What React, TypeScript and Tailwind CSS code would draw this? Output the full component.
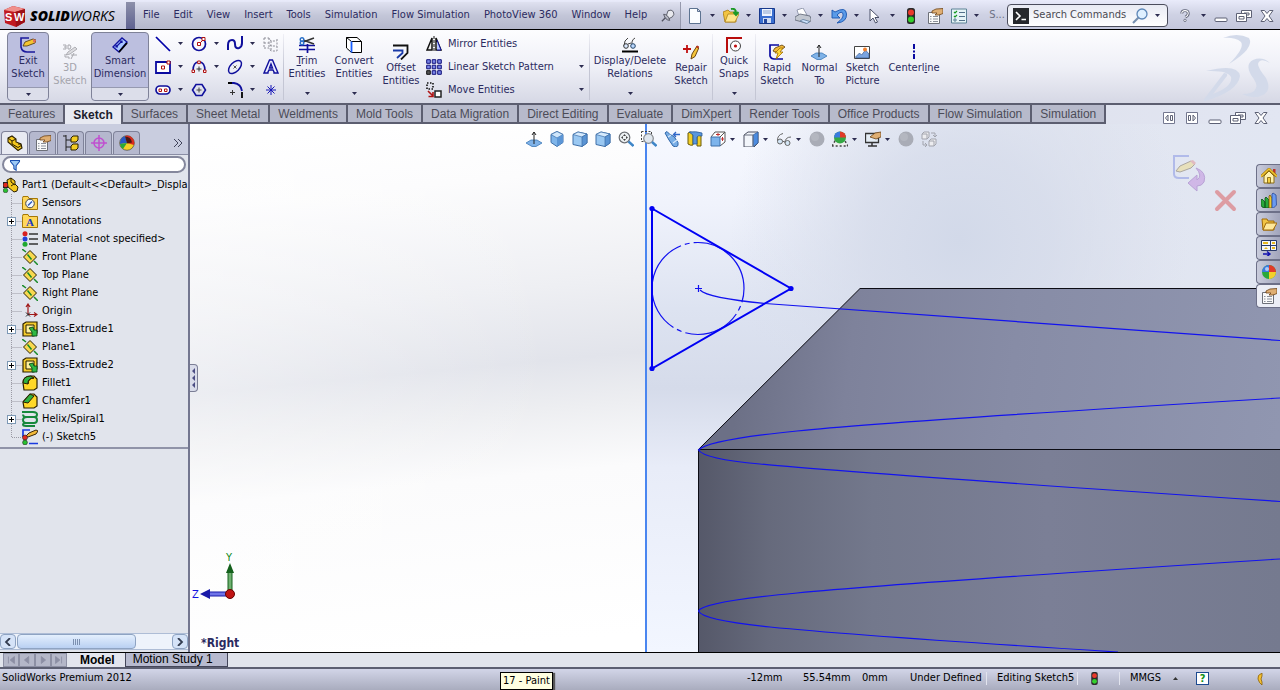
import type { ReactNode } from 'react';
import clsx from 'clsx';

const glyphs: Record<string, ReactNode> = {
    exitSketch: (
        <>
            <path d="M9 1H1v9q1 5 6 5h8" fill="none" stroke="#1a1a9c" strokeWidth="1.6" />
            <path d="M3 9l2-4 8-3 3 1-1 3-8 3z" fill="#f4c430" stroke="#4a3508" strokeWidth=".8" />
            <path d="M13 2l3 1-1 3-2-1z" fill="#e0705a" />
        </>
    ),
    sketch3d: (
        <>
            <path d="M1 1h3v4H1M2 3h2M6 1h2q2 2 0 4H6z" fill="none" stroke="#a8a8ae" />
            <path d="M4 11l2-3 7-5 2 2-7 5z" fill="#dcdce0" stroke="#a0a0a6" strokeWidth=".8" />
            <path d="M3 10v3h4v2M9 11h6M12 9l-3 6" fill="none" stroke="#a8a8ae" />
        </>
    ),
    smartDim: (
        <>
            <path d="M1 10l9-9 5 4-8 10z" fill="#a9c6ff" stroke="#1212a0" strokeWidth="1.4" />
            <path d="M4 10l6-6M4 8v2h2M8 4h2v2" fill="none" stroke="#1212a0" strokeWidth="1.2" />
            <path d="M7 15l8-9" stroke="#000" strokeWidth="1.8" />
        </>
    ),
    line: <path d="M1 1l14 14" stroke="#0000a8" strokeWidth="1.7" />,
    circle: (
        <>
            <circle cx="8" cy="8" r="6.5" fill="none" stroke="#10109c" strokeWidth="1.7" />
            <path d="M8 8l4-4" stroke="#b01010" />
            <path d="M6.5 6.500h3v3h-3zM11 1.500h3v3h-3z" fill="#fff" stroke="#b01010" />
        </>
    ),
    spline: <path d="M1 14V9q0-5 4-5 3 0 3 4 0 5 4 4 3-1 3-5V0" fill="none" stroke="#10109c" strokeWidth="2" />,
    grid: (
        <path
            d="M1 2h5l2 3h6M1 7h5l2 3h6M1 12h5l2 3h6M1 2v10M6 2v10M8 5v10M14 3v12"
            fill="none"
            stroke="#8c8c96"
            strokeDasharray="2 1.500"
        />
    ),
    rect: (
        <>
            <path d="M1 3h14v11H1z" fill="#fff" stroke="#0a0aa0" strokeWidth="1.8" />
            <path d="M6.500 7h3v3h-3zM12 2h3v3h-3z" fill="#fff" stroke="#b01010" />
        </>
    ),
    arc: (
        <>
            <path d="M2 12q0-9 6-9t6 9" fill="none" stroke="#10109c" strokeWidth="1.6" />
            <path d="M1 11h2.500v2.500H1zM12.500 11H15v2.500h-2.500zM6.700 2h2.600v2.600H6.700z" fill="#fff" stroke="#b01010" />
            <path d="M8 7.500v5M5.500 10h5" stroke="#333" />
        </>
    ),
    ellipse: (
        <>
            <ellipse cx="8" cy="8" rx="8" ry="4.500" transform="rotate(-45 8 8)" fill="none" stroke="#10109c" strokeWidth="1.5" />
            <path d="M6.500 6.500l3 3M9.500 6.500l-3 3" stroke="#555" />
        </>
    ),
    textA: <path d="M1 14h4v-1l1-2h4l1 2v1h4L9.500 1h-3L1 14zM6.500 9L8 5l1.500 4z" fill="#eef" stroke="#10109c" strokeWidth="1.400" />,
    slot: (
        <>
            <rect x="1" y="4" width="14" height="8" rx="4" fill="#fff" stroke="#10109c" strokeWidth="1.700" />
            <path d="M4 7h2.500v2.500H4zM9.500 7H12v2.500H9.500z" fill="#fff" stroke="#b01010" />
        </>
    ),
    polygon: (
        <>
            <path d="M1.500 8L5 2.500h6L14.500 8 11 13.500H5z" fill="none" stroke="#10109c" strokeWidth="1.600" />
            <path d="M8 5.500v5M5.500 8h5" stroke="#444" />
        </>
    ),
    fillet: (
        <>
            <path d="M1 1h6q7 1 8 8" fill="none" stroke="#10109c" strokeWidth="1.800" />
            <path d="M1 1h4M15 10v6" stroke="#000" strokeWidth="1.800" />
            <path d="M5.500 8v5M3 10.500h5" stroke="#333" />
        </>
    ),
    point: <path d="M8 3v10M3 8h10M4.500 4.500l7 7M11.500 4.500l-7 7" stroke="#1515b8" />,
    trim: (
        <>
            <path d="M0 8.500h16M0 12.500h16M8.500 7v9" stroke="#10109c" strokeWidth="1.700" />
            <path d="M4 5l11-4M4 3l11 4" stroke="#333" strokeWidth="1.500" />
            <circle cx="3" cy="2.500" r="1.800" fill="none" stroke="#2a70c8" strokeWidth="1.400" />
            <circle cx="3" cy="6" r="1.800" fill="none" stroke="#2a70c8" strokeWidth="1.400" />
        </>
    ),
    convert: (
        <>
            <path d="M.5.5H11l4.500 4v11H5.500l-5-4.500z" fill="#fff" stroke="#000" />
            <path d="M.5.5l5 4h10" fill="none" stroke="#000" />
            <path d="M5.500 4.500v11" stroke="#1a60ff" strokeWidth="1.800" />
        </>
    ),
    offset: (
        <>
            <path d="M0 1.500h14.500V9L8 15.500" fill="none" stroke="#111" strokeWidth="1.800" />
            <path d="M0 6.500h9.500V9L4 14" fill="none" stroke="#1a3aa8" strokeWidth="1.800" />
        </>
    ),
    mirror: (
        <>
            <path d="M6 2L1 14h5zM10 2l5 12h-5z" fill="#eee" stroke="#111" strokeWidth="1.500" />
            <path d="M11 4l4 10h-4" fill="#b9c8ff" stroke="#10109c" />
            <path d="M8 0v16" stroke="#111" strokeDasharray="3 1" />
        </>
    ),
    pattern: (
        <>
            <path d="M.7.7h3.600v3.600H.7zM6.200.7h3.600v3.600H6.200zM11.700.7h3.600v3.600h-3.600zM.7 6.200h3.600v3.600H.7zM6.200 6.200h3.600v3.600H6.200zM11.700 6.200h3.600v3.600h-3.600zM6.200 11.700h3.600v3.600H6.200zM11.700 11.700h3.600v3.600h-3.600z" fill="#7a86e8" stroke="#10107a" />
            <path d="M.7 11.700h3.600v3.600H.7z" fill="#555" stroke="#111" />
        </>
    ),
    move: (
        <>
            <path d="M1 1h6v6H1z" fill="none" stroke="#111" strokeWidth="1.600" strokeDasharray="1.500 1.500" />
            <path d="M2 9l5 5M7 10v4.500H2.500" fill="none" stroke="#b01515" strokeWidth="1.600" />
            <path d="M9 9h6v6H9z" fill="#fff" stroke="#222" strokeWidth="1.500" />
        </>
    ),
    relations: (
        <>
            <path d="M6 1Q2 3 2 9M13 1q-4 2-3 8M6 7l3-1" fill="none" stroke="#444" />
            <circle cx="4" cy="9" r="2.300" fill="#dceaff" stroke="#333" />
            <circle cx="11" cy="9" r="2.300" fill="#bcd8ff" stroke="#246" />
            <path d="M0 14.500h16" stroke="#000" strokeWidth="2" />
        </>
    ),
    repair: (
        <>
            <path d="M4 1v8M0 5h8" stroke="#c01010" strokeWidth="1.800" />
            <path d="M8 15l1-5 5-8 2 1.500-4 9z" fill="#f6c53a" stroke="#6a4510" />
            <path d="M13.500 2.500l2 1" stroke="#c03020" strokeWidth="2" />
        </>
    ),
    snaps: (
        <>
            <path d="M1 16V1h15" fill="none" stroke="#b80c0c" strokeWidth="2" />
            <circle cx="9.500" cy="9" r="5" fill="#fff" stroke="#444" />
            <circle cx="9.500" cy="9" r="1.600" fill="#c01010" />
        </>
    ),
    rapid: (
        <>
            <path d="M10 1H1v11q1 3 4 3h9" fill="none" stroke="#0a0aa0" strokeWidth="1.700" />
            <path d="M4 7l2-3 7-3 3 2-4 3-6 2z" fill="#f2b93a" stroke="#5a3a08" strokeWidth=".8" />
            <path d="M11 4L6 9h3l-2 6 7-7h-3l3-4z" fill="#ffd83a" stroke="#a06a00" strokeWidth=".8" />
        </>
    ),
    normal: (
        <>
            <path d="M0 12l5-3h6l5 3-6 3.500H6z" fill="#7fb2e8" stroke="#3c78b8" strokeWidth=".8" />
            <path d="M8 13V1M6 4l2-3 2 3" fill="none" stroke="#222" />
        </>
    ),
    picture: (
        <>
            <path d="M.5 2.500h15v12H.5z" fill="#fff" stroke="#444" />
            <path d="M1.500 13l4-4 2 2 4-5 3.500 4v4h-13z" fill="#7aa4e0" stroke="#2a4a80" strokeWidth=".6" />
            <circle cx="11" cy="5.500" r="2" fill="#f08030" />
        </>
    ),
    centerline: <path d="M8 0v16" stroke="#0a0aa0" strokeWidth="2" strokeDasharray="5 1.500 2 1.500" />,
    page: <path d="M2.500.5h8l3 3v12h-11zM10.500.5v3h3" fill="#fbfdff" stroke="#5d7391" />,
    open: (
        <>
            <path d="M0 4l5-2 2 2h6v10H2z" fill="#f2c443" stroke="#a87c12" strokeWidth=".8" />
            <path d="M2 14l3-8h11l-4 8z" fill="#ffe48a" stroke="#b08418" strokeWidth=".8" />
            <path d="M8 1q5-1 5 4M10.500 4L13 7l2.500-3" fill="none" stroke="#1e9a28" strokeWidth="2" />
        </>
    ),
    save: (
        <>
            <path d="M.5.5h15v15h-15z" fill="#3a6fd0" stroke="#17388c" />
            <path d="M3 1h10v7H3z" fill="#eef4ff" />
            <path d="M4 3h8M4 5h8" stroke="#8aa4cc" />
            <path d="M4 10h8v5H4z" fill="#cfdcf2" />
            <path d="M5 11h3v4H5z" fill="#24479c" />
        </>
    ),
    print: (
        <>
            <path d="M4 8L2 2l6-2 4 7z" fill="#fff" stroke="#8088a0" strokeWidth=".8" />
            <path d="M0 9l5-3 10 2 1 3v2l-5 2-11-3z" fill="#c2c7d0" stroke="#5d6473" strokeWidth=".8" />
            <path d="M5 13l7 2.500 3-2-7-2z" fill="#cfe4ff" stroke="#5d7898" strokeWidth=".8" />
        </>
    ),
    undo: <path d="M1 2v8h8L6 7q5-5 6-1t-6 9q10-1 9.500-9T4 4z" fill="#5a9be8" stroke="#1a55b0" strokeWidth=".9" />,
    cursor: <path d="M3 1v12l3-3 2.500 5 2-1L8 9.500h4z" fill="#fff" stroke="#4a5068" />,
    traffic: (
        <>
            <rect x="4" y="0" width="8" height="16" rx="2.500" fill="#2b2b2b" />
            <circle cx="8" cy="4.500" r="3" fill="#ea3a2c" />
            <circle cx="8" cy="11.500" r="3" fill="#34d02c" />
        </>
    ),
    props: (
        <>
            <path d="M1.500 4.500h11v11h-11z" fill="#fafafa" stroke="#6d7078" />
            <path d="M3 8.500h1.500M6 8.500h5M3 11h1.500M6 11h5M3 13.500h1.500M6 13.500h5" stroke="#8a8f99" />
            <path d="M5 3l4-2 7-.5v5L12 7 8 7l2-2-5 0z" fill="#dfae72" stroke="#6c4316" strokeWidth=".8" />
        </>
    ),
    options: (
        <>
            <path d="M.5 1h15v14H.5z" fill="#e6f4f6" stroke="#5c8296" />
            <path d="M3 4l1 1 2-2M3 8l1 1 2-2" fill="none" stroke="#169a22" strokeWidth="1.200" />
            <path d="M3 11h2v2H3z" fill="none" stroke="#5c8296" />
            <path d="M8 4.500h6M8 8.500h6M8 12.500h6" stroke="#54718a" />
        </>
    ),
    pin: (
        <>
            <path d="M8 2q4-2 6 1t-1 6l-4 2-3-3z" fill="#e8e9ee" stroke="#50525f" />
            <path d="M3 6q5 0 7 7-5 0-7-7z" fill="#b4b6c2" stroke="#50525f" />
            <path d="M5 10l-4 4" stroke="#50525f" strokeWidth="1.500" />
        </>
    ),
    magnifier: (
        <>
            <circle cx="10" cy="6" r="5" fill="#dff0ff" stroke="#5d87b8" strokeWidth="1.300" />
            <path d="M6.500 9.500L1 15" stroke="#7790b0" strokeWidth="2.200" />
        </>
    ),
    zoomFit: (
        <>
            <circle cx="6.500" cy="6.500" r="5.300" fill="#eef2f4" stroke="#6d7075" strokeWidth="1.200" />
            <path d="M6.500 3l1.500 2h-3zM6.500 10L5 8h3zM3 6.500L5 5v3zM10 6.500L8 5v3z" fill="#444" />
            <path d="M10.500 10.500l5 4.500" stroke="#3f86c8" strokeWidth="2.400" />
        </>
    ),
    zoomArea: (
        <>
            <path d="M.5.500h10v10H.5z" fill="none" stroke="#444" strokeDasharray="2 1.500" />
            <circle cx="7.500" cy="7.500" r="4.800" fill="#dfe6ee" stroke="#85898f" strokeWidth="1.200" />
            <path d="M11 11l4.500 4" stroke="#3f86c8" strokeWidth="2.400" />
        </>
    ),
    prevView: (
        <>
            <path d="M1 2l2-1.500 3 3 4 2 4 6v3l-2 1.500-3-1-4-6z" fill="#79aee6" stroke="#2f66a8" />
            <path d="M4 6l3-2M9 12l4-3" stroke="#d6e8fa" strokeWidth="1.200" />
            <path d="M16 3.500h-6M12 1L9.500 3.500 12 6" fill="none" stroke="#2f66c8" strokeWidth="1.300" />
        </>
    ),
    cube: (
        <>
            <path d="M8 .5l6 3v8l-6 4-6-4v-8z" fill="#7fb5ea" stroke="#3e6fa8" />
            <path d="M8 .5l6 3-6 3.500-6-3.500z" fill="#cfe6fb" stroke="#3e6fa8" strokeWidth=".7" />
            <path d="M8 7l6-3.500v8l-6 4z" fill="#5c96d6" />
        </>
    ),
    box: (
        <>
            <path d="M1 3.500L6 1l9 2v9l-5 3.500-9-2z" fill="#9ac8f2" stroke="#3e6fa8" />
            <path d="M1 3.500L6 1l9 2-5 3z" fill="#d6eafc" stroke="#3e6fa8" strokeWidth=".7" />
            <path d="M10 6l5-3v9l-5 3.500z" fill="#5a94d4" stroke="#3e6fa8" strokeWidth=".7" />
        </>
    ),
    section: (
        <>
            <path d="M1 2q3-2 5 0v12q-2 1-5-1z" fill="#f2cf28" stroke="#6a5a08" />
            <path d="M10 3h4v12h-4z" fill="#f2cf28" stroke="#6a5a08" />
            <path d="M2 1q7-1 13 1v3q-4-1-5 1v7H6V4z" fill="#5a96dc" stroke="#2a5a98" strokeWidth=".8" />
        </>
    ),
    viewOrient: (
        <>
            <path d="M1 6l4-5h10v10l-5 4" fill="#fff" stroke="#555" />
            <path d="M1 6h9v9H1z" fill="#7db4ec" stroke="#3e6fa8" />
            <path d="M10 6l5-5" stroke="#555" />
            <path d="M8 2v3M6 3.500h4M12.500 6v4M11 8h3" stroke="#c23030" />
        </>
    ),
    display: (
        <>
            <path d="M1 4l4-3h10v11l-4 4H1z" fill="#f2f5fa" stroke="#4a4f60" />
            <path d="M10 4l5-3v11l-5 3.500z" fill="#4c8ce0" stroke="#305c98" strokeWidth=".7" />
            <path d="M1 4h9v11" fill="none" stroke="#6a7080" />
        </>
    ),
    glasses: (
        <>
            <path d="M1.500 10Q1 4 7 2.500M9 12q0-6 6-6M6 10l3 1" fill="none" stroke="#666" />
            <circle cx="4" cy="10.500" r="2.500" fill="#d4e6f6" stroke="#666" />
            <circle cx="11.500" cy="12" r="2.500" fill="#d4e6f6" stroke="#666" />
        </>
    ),
    ball: (
        <>
            <circle cx="8" cy="8" r="7.500" fill="#a9acb6" />
            <circle cx="6" cy="6" r="4" fill="#b4b7c0" />
        </>
    ),
    colorBall: (
        <>
            <circle cx="8" cy="8" r="7" fill="#2aa83a" />
            <path d="M8 1a7 7 0 0 1 7 7H8z" fill="#e23a28" />
            <path d="M8 1a7 7 0 0 0-7 7h7z" fill="#3a7ae0" />
            <path d="M8 8h7a7 7 0 0 1-7 7z" fill="#f4cf28" />
            <circle cx="6" cy="5" r="2" fill="#fff" opacity=".6" />
        </>
    ),
    scene: (
        <>
            <path d="M0 15l3-5h10l3 5z" fill="#eee" stroke="#444" strokeWidth="1.500" strokeDasharray="2 2" />
            <circle cx="8" cy="6.500" r="6" fill="#35a844" />
            <path d="M8 .5a6 6 0 0 1 6 6H8z" fill="#e23a28" />
            <path d="M8 .5a6 6 0 0 0-6 6h6z" fill="#3a7ae0" />
        </>
    ),
    monitor: (
        <>
            <path d="M.5 2.500h13v9H.5z" fill="#e4ecf4" stroke="#333" strokeWidth="1.300" />
            <path d="M3 15h9M7 12v3" stroke="#333" strokeWidth="1.500" />
            <path d="M5 6l5-4 6-1v5l-5 2z" fill="#dfae72" stroke="#6c4316" strokeWidth=".8" />
        </>
    ),
    motion: (
        <>
            <path d="M1 3l2-2h5v5L6 8H1zM1 3h5v5M8 10l2-2h5v5l-2 2H8zM8 10h5v5" fill="#ececef" stroke="#a2a4ad" />
            <path d="M10 2h4v4M12 4l2 2 2-2M2 10v4h4M4 12l2 2-2 2" fill="none" stroke="#a2a4ad" />
        </>
    ),
    part: (
        <>
            <path d="M1 3l4-2 4 3v3l5 2 1 4-4 2.500L1 7z" fill="#f4c81e" stroke="#2b2000" strokeWidth="1.100" />
            <path d="M1 3l4 3 4-2M5 6v3l6 3.500 4-2.500M11 9l3 0" fill="none" stroke="#2b2000" />
        </>
    ),
    config: (
        <>
            <path d="M3 0v16M0 1h3M3 5h5M3 12h5" fill="none" stroke="#222" />
            <path d="M8 3l2-2h5v4l-2 2H8zM8 11l2-2h5v4l-2 2H8z" fill="#f2cc24" stroke="#2b2000" />
        </>
    ),
    target: (
        <>
            <circle cx="8" cy="8" r="5" fill="none" stroke="#c050d0" strokeWidth="1.500" />
            <path d="M8 0v16M0 8h16" stroke="#c050d0" strokeWidth="1.500" />
        </>
    ),
    appearance: (
        <>
            <circle cx="8" cy="8" r="7.300" fill="#f4cf28" stroke="#333" strokeWidth=".6" />
            <path d="M8 8L6 .9a7.300 7.300 0 0 1 9 9z" fill="#d82a20" />
            <path d="M8 8L6 .9A7.300 7.300 0 0 0 1 9z" fill="#2858c8" />
            <path d="M8 8L1 9a7.300 7.300 0 0 0 3 5z" fill="#2aa83a" />
            <path d="M6 1.500q6 0 7 6l-5 1z" fill="#111" opacity=".7" />
        </>
    ),
    funnel: <path d="M2 2h12v1.500L9.500 9v6L6.500 13V9L2 3.500z" fill="#9cc8f4" stroke="#1a50b0" strokeWidth="1.400" />,
    partTree: (
        <>
            <path d="M4 3l4-2 4 3v3l3 3-1 4-3 1-6-5z" fill="#f4c81e" stroke="#2b2000" />
            <path d="M8 1v4l4 3M8 9l3-2" fill="none" stroke="#2b2000" />
            <path d="M0 5h5v6H0z" fill="#222" />
            <circle cx="2.500" cy="8" r="2.200" fill="#e02a20" />
            <circle cx="2.500" cy="13.500" r="2.300" fill="#28c030" stroke="#222" strokeWidth=".5" />
        </>
    ),
    sensors: (
        <>
            <path d="M.5 3.500v11h15v-11H7L6 1.500H1z" fill="#ffd75a" stroke="#a57808" />
            <circle cx="8" cy="8.500" r="4.300" fill="#f2f8ff" stroke="#444" />
            <path d="M6 10.500l4-4" stroke="#2a5ac0" strokeWidth="1.500" />
        </>
    ),
    annotations: (
        <>
            <path d="M.5 3.500v11h15v-11H7L6 1.500H1z" fill="#ffd75a" stroke="#a57808" />
            <text x="8" y="13" fontSize="11" fontWeight="bold" textAnchor="middle" fill="#1a3ac0" fontFamily="Liberation Serif, serif">
                A
            </text>
        </>
    ),
    material: (
        <>
            <path d="M7 3h9M7 8h9M7 13h9" stroke="#333" strokeWidth="1.600" />
            <circle cx="3" cy="2.800" r="2.500" fill="#d82020" />
            <circle cx="3" cy="8" r="2.500" fill="#2440d8" />
            <circle cx="3" cy="13.200" r="2.500" fill="#20a830" />
        </>
    ),
    plane: (
        <>
            <path d="M8 1.500L14.500 8 8 14.500 1.500 8z" fill="#f8d84e" stroke="#2b2000" />
            <path d="M0 0l4 3M5.500 5.500l4 5M12 12l4 4" stroke="#1a8a2a" strokeWidth="1.500" />
        </>
    ),
    origin: (
        <>
            <path d="M6 11V2M4 4l2-3 2 3M6 11.500h8M12 9.500l3 2-3 2" fill="none" stroke="#a01818" strokeWidth="1.200" />
            <path d="M4 9.500l4 4M8 9.500l-4 4" stroke="#222" />
        </>
    ),
    extrude: (
        <>
            <path d="M1 3l3-2h11v11l-3 3H1z" fill="#f4cc2c" stroke="#2b2000" strokeWidth="1.200" />
            <path d="M4 4h8v8H4z" fill="#fff0a0" stroke="#2b2000" />
            <path d="M7 7l4-1 1 3h3v6H10v-4z" fill="#2fb844" stroke="#0a4a14" strokeWidth=".9" />
        </>
    ),
    filletTree: (
        <>
            <path d="M1 8q0-7 8-7h3l3 3v9l-3 2H2z" fill="#ffd828" stroke="#2b2000" strokeWidth="1.200" />
            <path d="M1 8q0-7 8-7l3 2q-6 0-6 6z" fill="#2eb040" stroke="#2b2000" />
            <path d="M6 9q0-6 6-6" fill="none" stroke="#2b2000" />
        </>
    ),
    chamfer: (
        <>
            <path d="M1 9l7-8h4l3 3v9l-3 2H2z" fill="#ffd828" stroke="#2b2000" strokeWidth="1.200" />
            <path d="M1 9l7-8 4 2-6 7z" fill="#2eb040" stroke="#2b2000" />
        </>
    ),
    helix: (
        <path
            d="M0 1h11q4 0 4 2.500T12 6H5Q1 6 1 3.500M5 6Q1 6 1 9t4 3h7q3 0 3-3t-3-3M5 12q-4 0-4 1.500T4 15h9"
            fill="none"
            stroke="#16883c"
            strokeWidth="2"
        />
    ),
    sketchTree: (
        <>
            <path d="M8 1H1v7M7 14.500h9" fill="none" stroke="#1a3ae0" strokeWidth="1.700" />
            <path d="M4 7l3-3 7-3 2 1-2 3-8 3z" fill="#f2b93a" stroke="#3a2508" />
            <circle cx="3" cy="8.500" r="2.500" fill="#e02a20" stroke="#222" strokeWidth=".6" />
            <circle cx="3" cy="13.500" r="2.400" fill="#28c030" stroke="#222" strokeWidth=".6" />
        </>
    ),
    home: (
        <>
            <path d="M12 1h2.500v7H12z" fill="#c03028" />
            <path d="M3 8v7h10V8L8 3z" fill="#fff2b0" stroke="#8a6a10" />
            <path d="M0 8.500L8 1l8 7.500" fill="none" stroke="#9a7208" strokeWidth="2.600" />
            <path d="M0 8.500L8 1l8 7.500" fill="none" stroke="#f0c430" strokeWidth="1.400" />
            <path d="M6.500 9.500h3V15h-3z" fill="#f6d040" stroke="#7a5a08" strokeWidth=".8" />
        </>
    ),
    library: (
        <>
            <path d="M0 8l1-1 3 3v6l-3-1-1-2zM4 6l1-1 3 3v8H4z" fill="#2aa83a" stroke="#0c5018" strokeWidth=".8" />
            <path d="M8 4l1-1 2 3v10H8z" fill="#f0c828" stroke="#7a5a08" strokeWidth=".8" />
            <path d="M11 2l1-1 3 2 .5 10-3 3H11z" fill="#6a9af0" stroke="#2a4a98" strokeWidth=".8" />
        </>
    ),
    folder: (
        <>
            <path d="M1 3h5l1 2h6v9H2z" fill="#f2c443" stroke="#a06a08" />
            <path d="M2 14l3-7h11l-4 7z" fill="#ffe89a" stroke="#a06a08" />
        </>
    ),
    palette: (
        <>
            <path d="M.5.5h15v10H.5zM9.500.5v10M.5 5.500h15" fill="#f4f6fa" stroke="#2a3a6a" />
            <path d="M2 3h5M11 3h3" stroke="#e8b820" strokeWidth="2" />
            <path d="M3 9l2-2 2 2zM11 7h3v2h-3z" fill="#e8b820" />
            <path d="M2 14h6M6 11.500L9 14l-3 2.500" fill="none" stroke="#1010b0" strokeWidth="1.400" />
        </>
    ),
    minimize: <rect x="2" y="10" width="12" height="3.500" rx="1" fill="#fff" stroke="#5d6175" />,
    restore: (
        <>
            <path d="M5.500 2.500h10v7h-10zM8 5h5v2H8z" fill="#fff" stroke="#5d6175" />
            <path d="M.5 5.500h10v8H.5zM3 8.500h5v2.500H3z" fill="#fff" stroke="#5d6175" />
        </>
    ),
    close: <path d="M2 2.500h3.500L8 5.500l2.500-3H14L10 8l4 5.500h-3.500L8 10.500l-2.500 3H2L6 8z" fill="#fff" stroke="#5d6175" />,
    help: (
        <>
            <path d="M4 5.500Q4 2 8 2t4 3.500Q12 8 8.500 10" fill="none" stroke="#5d6175" strokeWidth="3.500" />
            <path d="M4 5.500Q4 2 8 2t4 3.500Q12 8 8.500 10" fill="none" stroke="#fff" strokeWidth="1.300" />
            <circle cx="8" cy="14" r="1.500" fill="#fff" stroke="#5d6175" />
        </>
    ),
    dockLeft: (
        <>
            <path d="M2.500 2.500h11v11h-11z" fill="#fff" stroke="#747890" />
            <path d="M7 5v6L4.500 8zM9.500 5.500h2v5h-2z" fill="#fff" stroke="#5d6175" />
        </>
    ),
    dockRight: (
        <>
            <path d="M2.500 2.500h11v11h-11z" fill="#fff" stroke="#747890" />
            <path d="M9 5v6l2.500-3zM4.500 5.500h2v5h-2z" fill="#fff" stroke="#5d6175" />
        </>
    ),
    prompt: (
        <>
            <path d="M0 0h16v16H0z" fill="#26282c" />
            <path d="M3 4l4 4-4 4M8.500 11.500H13" fill="none" stroke="#fff" strokeWidth="1.600" />
        </>
    ),
};

function Icon({ name, className = 'size-4' }: { name: string; className?: string }) {
    return (
        <svg viewBox="0 0 16 16" className={clsx('shrink-0', className)} aria-hidden="true">
            {glyphs[name]}
        </svg>
    );
}

function Caret({ className }: { className?: string }) {
    return (
        <svg viewBox="0 0 5 3" className={clsx('h-[3px] w-[5px] shrink-0', className)} aria-hidden="true">
            <path d="M0 0h5L2.500 3z" fill="#2c2c50" />
        </svg>
    );
}

const menus = ['File', 'Edit', 'View', 'Insert', 'Tools', 'Simulation', 'Flow Simulation', 'PhotoView 360', 'Window', 'Help'];

function TitleBar() {
    return (
        <header className="flex h-[30px] items-stretch border-b border-black bg-linear-to-b from-[#e9ebfa] via-[#cfd2e4] to-[#c4c7dc] pt-[2px]">
            <div className="flex w-[126px] shrink-0 items-center gap-1 pl-1">
                <svg viewBox="0 0 22 22" className="size-[22px]" aria-hidden="true">
                    <path d="M0 5l9-4 12 3v13l-9 5L1 18z" fill="#c01a20" />
                    <path d="M0 5l9-4 12 3-10 3z" fill="#f0908c" />
                    <path d="M11 7l10-3v13l-9 5z" fill="#9c1016" />
                    <text x="1" y="16" fontSize="11" fontWeight="bold" fill="#fff" fontFamily="Liberation Sans, sans-serif">S</text>
                    <text x="10" y="16" fontSize="11" fontWeight="bold" fill="#fff" fontFamily="Liberation Sans, sans-serif">W</text>
                </svg>
                <span className="font-['Open_Sans',sans-serif] text-[14px] italic text-black">
                    <b className="font-extrabold">SOLID</b>WORKS
                </span>
            </div>
            <div className="w-[9px] shrink-0 bg-linear-to-b from-[#8d90aa] to-[#5f6290]" />
            <nav className="flex shrink-0 items-center bg-linear-to-b from-[#dfe1f0] via-[#c3c6d8] to-[#b4b7cb] pl-px">
                {menus.map((menu) => (
                    <button key={menu} className="h-full px-[7px] whitespace-nowrap text-[#2b2b60]">{menu}</button>
                ))}
                <button aria-label="Pin" className="w-[26px] pl-[7px]"><Icon name="pin" className="size-[14px]" /></button>
            </nav>
            <div className="flex flex-1 items-center justify-end border-l border-[#9699ad]">
                <div className="flex flex-1 items-center pl-[6px]">
                    {['page', 'open', 'save', 'print', 'undo', 'cursor'].map((name) => (
                        <button key={name} aria-label={name} className="flex w-9 shrink-0 items-center gap-[7px]">
                            <Icon name={name} />
                            <Caret />
                        </button>
                    ))}
                    <button aria-label="Rebuild" className="w-6"><Icon name="traffic" /></button>
                    <button aria-label="Properties" className="w-6"><Icon name="props" /></button>
                    <button aria-label="Options" className="flex w-[38px] items-center gap-[7px]">
                        <Icon name="options" />
                        <Caret />
                    </button>
                    <span className="text-[#6d7084]">S...</span>
                </div>
                <label className="flex h-[23px] w-[161px] shrink-0 items-center gap-1 rounded-sm border border-[#4b4d5c] bg-linear-to-b from-[#e8eaf3] to-white px-1 pl-[5px]">
                    <Icon name="prompt" />
                    <input className="w-0 flex-1 bg-transparent text-[#4a4a52] outline-none placeholder:text-[#4a4a52]" placeholder="Search Commands" aria-label="Search Commands" />
                    <Icon name="magnifier" />
                    <Caret className="mx-[3px]" />
                </label>
                <div className="flex shrink-0 items-center gap-[7px] px-[5px]">
                    <button aria-label="Help" className="flex items-center gap-2 pl-1">
                        <Icon name="help" className="h-[13px] w-4" />
                        <Caret />
                    </button>
                    <button aria-label="Minimize"><Icon name="minimize" /></button>
                    <button aria-label="Restore"><Icon name="restore" /></button>
                    <button aria-label="Close"><Icon name="close" /></button>
                </div>
            </div>
        </header>
    );
}

function Command({ icon, lines, width, caret, low, pressed, disabled }: {
    icon: string;
    lines: ReactNode[];
    width: string;
    caret?: boolean;
    low?: boolean;
    pressed?: boolean;
    disabled?: boolean;
}) {
    return (
        <button
            disabled={disabled}
            className={clsx(
                'flex h-[69px] shrink-0 flex-col items-center rounded-sm border leading-[13px]',
                width,
                pressed ? 'border-[#7f8298] bg-[#bcbfdf]' : 'border-transparent',
                disabled ? 'text-[#a4a4ac]' : 'text-[#2b2b60]',
            )}
        >
            <span className={clsx('flex flex-1 flex-col items-center gap-[1px]', low ? 'pt-[11px]' : 'pt-1')}>
                <Icon name={icon} />
                <span className="whitespace-nowrap">
                    {lines.map((text, i) => (
                        <span key={i} className="block">{text}</span>
                    ))}
                </span>
            </span>
            {caret && (
                <span className={clsx('flex h-[13px] w-full items-center justify-center', pressed && 'rounded-b-sm border-t border-[#9699b0] bg-[#dcdeea]')}>
                    <Caret />
                </span>
            )}
        </button>
    );
}

function Divider() {
    return <div className="h-[66px] w-px shrink-0 bg-linear-to-b from-[#f0f0f6] via-[#c4c6d4] to-[#c4c6d4]" />;
}

const sketchTools = [
    ['line', 'circle', 'spline', 'grid'],
    ['rect', 'arc', 'ellipse', 'textA'],
    ['slot', 'polygon', 'fillet', 'point'],
];
const noCaret = ['grid', 'textA', 'point', 'polygon'];

const entityTools = [
    { icon: 'mirror', label: 'Mirror Entities', caret: false },
    { icon: 'pattern', label: 'Linear Sketch Pattern', caret: true },
    { icon: 'move', label: 'Move Entities', caret: true },
];

function Ribbon() {
    return (
        <section className="flex h-[73px] items-center bg-linear-to-b from-[#fdfdff] via-[#eff0f7] to-[#d6d8e5] pl-[7px]">
            <Command icon="exitSketch" lines={['Exit', 'Sketch']} width="w-[42px]" caret pressed />
            <Command icon="sketch3d" lines={['3D', 'Sketch']} width="w-[42px]" low disabled />
            <Command icon="smartDim" lines={['Smart', 'Dimension']} width="w-[58px]" caret pressed />
            <div className="flex w-[134px] shrink-0 flex-col gap-[7px] pl-[6px]">
                {sketchTools.map((row) => (
                    <div key={row[0]} className="flex">
                        {row.map((tool) => (
                            <button key={tool} aria-label={tool} className="flex w-9 shrink-0 items-center gap-[7px] last:w-4">
                                <Icon name={tool} />
                                {!noCaret.includes(tool) && <Caret />}
                            </button>
                        ))}
                    </div>
                ))}
            </div>
            <Divider />
            <Command icon="trim" lines={[<><u>T</u>rim</>, 'Entities']} width="w-[46px]" caret />
            <Command icon="convert" lines={['Convert', 'Entities']} width="w-[48px]" caret />
            <Command icon="offset" lines={['Offset', 'Entities']} width="w-[46px]" low />
            <div className="flex w-[165px] shrink-0 flex-col gap-[7px] pr-[5px] pl-[2px]">
                {entityTools.map(({ icon, label, caret }) => (
                    <button key={label} className="flex items-center text-[#2b2b60]">
                        <Icon name={icon} />
                        <span className="flex-1 pl-[6px] text-left leading-4">{label}</span>
                        {caret && <Caret />}
                    </button>
                ))}
            </div>
            <Divider />
            <Command icon="relations" lines={['Display/Delete', 'Relations']} width="w-[80px]" caret />
            <Command icon="repair" lines={['Repair', 'Sketch']} width="w-[42px]" low />
            <Divider />
            <Command icon="snaps" lines={['Quick', 'Snaps']} width="w-[42px]" caret />
            <Divider />
            <Command icon="rapid" lines={['Rapid', 'Sketch']} width="w-[42px]" low />
            <Command icon="normal" lines={['Normal', 'To']} width="w-[43px]" low />
            <Command icon="picture" lines={['Sketch', 'Picture']} width="w-[43px]" low />
            <Command icon="centerline" lines={[<>Centerl<u>i</u>ne</>]} width="w-[60px]" low />
            <svg viewBox="0 0 72 72" className="mr-1 ml-auto h-[72px] w-[72px]" fill="#d3daea" aria-hidden="true">
                <path d="M19 7q14-6 26 0 6 10-20 26 16-16 12-22-6-5-18-4z" />
                <path d="M2 40q32-8 34 5-2 16-38 26L20 42q4 0 3 3L9 63q20-8 18-17-3-7-25-6z" />
                <path d="M66 32q-10-6-12 1 0 4 8 14 6 12-3 17-10 5-21-1 12 0 14-6 2-4-5-13-6-11 2-15 9-4 17 3z" />
            </svg>
        </section>
    );
}

const tabs = [
    'Features', 'Sketch', 'Surfaces', 'Sheet Metal', 'Weldments', 'Mold Tools', 'Data Migration', 'Direct Editing',
    'Evaluate', 'DimXpert', 'Render Tools', 'Office Products', 'Flow Simulation', 'Simulation',
];

function TabRow() {
    return (
        <div className="flex h-[21px] items-start justify-between border-t-2 border-[#5c5e70] bg-linear-to-r from-[#dfe2ee] from-80% to-[#e2e6f2] font-['Liberation_Sans',Arial,sans-serif] text-[12px]">
            <div role="tablist" className="flex h-full">
                {tabs.map((tab) => (
                    <button
                        key={tab}
                        role="tab"
                        aria-selected={tab === 'Sketch'}
                        className={clsx(
                            'border-r-2 border-[#5c5e70] px-[8px] whitespace-nowrap',
                            tab === 'Sketch' ? 'bg-[#e8eaf2] font-bold text-[#1c1c2c]' : 'border-b-2 bg-[#b7bacb] text-[#4c4c58]',
                        )}
                    >
                        {tab}
                    </button>
                ))}
            </div>
            <div className="flex gap-[7px] pt-[5px] pr-[11px]">
                {['dockLeft', 'dockRight', 'minimize', 'restore', 'close'].map((name) => (
                    <button key={name} aria-label={name}><Icon name={name} /></button>
                ))}
            </div>
        </div>
    );
}

const features = [
    { icon: 'sensors', label: 'Sensors' },
    { icon: 'annotations', label: 'Annotations', open: true },
    { icon: 'material', label: 'Material <not specified>' },
    { icon: 'plane', label: 'Front Plane' },
    { icon: 'plane', label: 'Top Plane' },
    { icon: 'plane', label: 'Right Plane' },
    { icon: 'origin', label: 'Origin' },
    { icon: 'extrude', label: 'Boss-Extrude1', open: true },
    { icon: 'plane', label: 'Plane1' },
    { icon: 'extrude', label: 'Boss-Extrude2', open: true },
    { icon: 'filletTree', label: 'Fillet1' },
    { icon: 'chamfer', label: 'Chamfer1' },
    { icon: 'helix', label: 'Helix/Spiral1', open: true },
    { icon: 'sketchTree', label: '(-) Sketch5' },
];

function Branch({ open, last }: { open?: boolean; last: boolean }) {
    return (
        <svg viewBox="0 0 15 18" className="h-[18px] w-[15px] shrink-0" aria-hidden="true">
            <path d={last ? 'M4.500 0v9.500H15' : 'M4.500 0v18M4.500 9.500H15'} fill="none" stroke="#9a9aa4" strokeDasharray="1 1" />
            {open && (
                <>
                    <rect x=".5" y="5.500" width="8" height="8" fill="#fff" stroke="#7c98b4" />
                    <path d="M2 9.500h5M4.500 7v5" stroke="#000" />
                </>
            )}
        </svg>
    );
}

function FeatureManager() {
    return (
        <aside className="flex w-[190px] shrink-0 flex-col border-r-2 border-[#73768f] bg-[#e1e4ec] text-black">
            <div className="flex h-[31px] items-end border-b border-[#8a8da4] bg-[#c9cddf] pl-px">
                {['part', 'props', 'config', 'target', 'appearance'].map((name, i) => (
                    <button
                        key={name}
                        aria-label={name}
                        className={clsx(
                            'mr-px flex h-[23px] w-[27px] items-center justify-center rounded-t border border-b-0 border-[#7f8299]',
                            i === 0 ? 'bg-[#e8eaf2]' : 'bg-[#b5b8ce]',
                        )}
                    >
                        <Icon name={name} />
                    </button>
                ))}
                <button aria-label="More tabs" className="mr-[5px] mb-[7px] ml-auto">
                    <svg viewBox="0 0 10 8" className="h-2 w-[10px]" aria-hidden="true">
                        <path d="M1 0l4 4-4 4M5 0l4 4-4 4" fill="none" stroke="#40435a" />
                    </svg>
                </button>
            </div>
            <label className="mx-[2px] mt-px flex h-[17px] items-center rounded-full border-2 border-[#84879c] bg-white pl-[5px]">
                <Icon name="funnel" className="size-3" />
                <input aria-label="Filter" className="w-0 flex-1 bg-transparent outline-none" />
            </label>
            <ul className="mt-[3px] overflow-hidden border-b-2 border-[#9093a8] pb-px whitespace-nowrap">
                <li className="flex h-[18px] items-center gap-[3px] pl-[3px]">
                    <Icon name="partTree" />
                    <span>Part1 (Default&lt;&lt;Default&gt;_Displa</span>
                </li>
                {features.map(({ icon, label, open }, i) => (
                    <li key={label} className="flex h-[18px] items-center pl-[7px]">
                        <Branch open={open} last={i === features.length - 1} />
                        <Icon name={icon} />
                        <span className="pl-1">{label}</span>
                    </li>
                ))}
            </ul>
            <div className="mt-auto mb-[2px] flex h-[17px] border-y border-[#aebdd6] bg-[#eef3fb]">
                <button aria-label="Scroll left" className="w-4 rounded-sm border border-[#8ea3c2] bg-[#d5e3f8]">
                    <svg viewBox="0 0 8 8" className="mx-auto size-2"><path d="M6 0L2 4l4 4" fill="none" stroke="#333c50" strokeWidth="1.800" /></svg>
                </button>
                <div className="ml-px flex w-[119px] items-center justify-center gap-px rounded-sm border border-[#8ea3c2] bg-linear-to-b from-[#e4effd] to-[#b9d0f2]">
                    {[0, 1, 2, 3].map((n) => <i key={n} className="h-[6px] w-px bg-[#7c90b0]" />)}
                </div>
                <button aria-label="Scroll right" className="ml-auto w-4 rounded-sm border border-[#8ea3c2] bg-[#d5e3f8]">
                    <svg viewBox="0 0 8 8" className="mx-auto size-2"><path d="M2 0l4 4-4 4" fill="none" stroke="#333c50" strokeWidth="1.800" /></svg>
                </button>
            </div>
        </aside>
    );
}

function Scene() {
    return (
        <svg viewBox="190 124 1090 528" preserveAspectRatio="xMinYMin slice" className="absolute inset-0 size-full" role="img" aria-label="Part model">
            <defs>
                <linearGradient id="paper" gradientUnits="userSpaceOnUse" x1="400" y1="124" x2="450" y2="652">
                    <stop offset="0" stopColor="#ffffff" />
                    <stop offset=".12" stopColor="#fcfcfd" />
                    <stop offset=".33" stopColor="#eeeff3" />
                    <stop offset=".47" stopColor="#e2e4eb" />
                    <stop offset=".56" stopColor="#edeef1" />
                    <stop offset=".68" stopColor="#fbfbfc" />
                    <stop offset="1" stopColor="#ffffff" />
                </linearGradient>
                <linearGradient id="paperFade" x1="0" y1="0" x2="1" y2="0">
                    <stop offset="0" stopColor="#fff" stopOpacity=".35" />
                    <stop offset=".8" stopColor="#fff" stopOpacity="0" />
                </linearGradient>
                <linearGradient id="sky" x1="0" y1="0" x2="0" y2="1">
                    <stop offset="0" stopColor="#f7f9ff" />
                    <stop offset=".15" stopColor="#f0f3fc" />
                    <stop offset=".35" stopColor="#dde3f1" />
                    <stop offset=".5" stopColor="#d5dbea" />
                    <stop offset=".65" stopColor="#e8ecf8" />
                    <stop offset="1" stopColor="#f2f6ff" />
                </linearGradient>
                <linearGradient id="skyRight" x1="0" y1="0" x2="1" y2="0">
                    <stop offset=".15" stopColor="#e2e6f2" stopOpacity="0" />
                    <stop offset=".7" stopColor="#e1e5f0" stopOpacity=".9" />
                    <stop offset="1" stopColor="#e1e6f2" />
                </linearGradient>
                <radialGradient id="haze" gradientUnits="userSpaceOnUse" cx="960" cy="240" r="230">
                    <stop offset="0" stopColor="#d2d9e9" />
                    <stop offset=".4" stopColor="#d5dbea" stopOpacity=".8" />
                    <stop offset="1" stopColor="#d9deec" stopOpacity="0" />
                </radialGradient>
                <linearGradient id="slope" gradientUnits="userSpaceOnUse" x1="740" y1="360" x2="1280" y2="420">
                    <stop offset="0" stopColor="#6c7086" />
                    <stop offset=".2" stopColor="#7e829b" />
                    <stop offset=".5" stopColor="#878ca6" />
                    <stop offset="1" stopColor="#9096b0" />
                </linearGradient>
                <linearGradient id="wall" x1="0" y1="0" x2="1" y2="0">
                    <stop offset="0" stopColor="#555869" />
                    <stop offset=".12" stopColor="#666a7c" />
                    <stop offset=".3" stopColor="#73788c" />
                    <stop offset=".6" stopColor="#7b7f96" />
                    <stop offset="1" stopColor="#757a8f" />
                </linearGradient>
            </defs>
            <path d="M190 124h457v528H190z" fill="url(#paper)" />
            <path d="M190 124h457v528H190z" fill="url(#paperFade)" />
            <path d="M647 124h633v528H647z" fill="url(#sky)" />
            <path d="M647 124h633v165H647z" fill="url(#skyRight)" />
            <path d="M647 124h633v528H647z" fill="url(#haze)" />
            <path d="M646 124v528" stroke="#4a86f0" strokeWidth="2" />
            <path d="M860 288.500h420v161H698z" fill="url(#slope)" />
            <path d="M698.500 449.500H1280V652H698.500z" fill="url(#wall)" />
            <path d="M1280 288.500H860L698.500 449.500V652M698.500 449.500H1280" fill="none" stroke="#0c0c14" />
            <g fill="none" stroke="#1212f0" strokeWidth="1.200">
                <path d="M700 290q8 8 65 13.500Q900 314 1280 340.500" />
                <path d="M1280 398Q880 422 797 431 708 440 698.500 450 704 459 760 464 840 472 1280 501.500" />
                <path d="M1280 559Q900 583 797 593 702 602 698.500 611 702 620 770 627 860 636 1118 652" />
                <path d="M695 288.500h7M698.500 285v7" />
                <circle cx="698" cy="288.500" r="46" strokeDasharray="14 4 5 4 58 4 5 4 48 5 48 4 5 4 78 4" />
            </g>
            <path d="M652 208.500L791 288.500 652 368.500z" fill="none" stroke="#0000f4" strokeWidth="2" />
            <g fill="#0000f4">
                <circle cx="652" cy="208.500" r="2.600" />
                <circle cx="791" cy="288.500" r="2.600" />
                <circle cx="652" cy="368.500" r="2.600" />
            </g>
            <path d="M228 570h4v22h-4z" fill="#6fb070" stroke="#14601c" />
            <path d="M226 573l4-10 4 10z" fill="#14601c" />
            <path d="M208 592h20v4h-20z" fill="#6f74e8" stroke="#1a1aa8" />
            <path d="M210 589l-10 5 10 5z" fill="#1a1aa8" />
            <circle cx="230" cy="594" r="4.500" fill="#c01414" stroke="#600" />
            <text x="226" y="561" fontSize="11" fill="#128a1a">Y</text>
            <text x="192" y="598" fontSize="11" fill="#1212e0">Z</text>
            <text x="201" y="647" fontSize="12" fontWeight="bold" fill="#2b2b60">*Right</text>
        </svg>
    );
}

const viewTools = [
    { icon: 'normal' }, { icon: 'cube' }, { icon: 'box' }, { icon: 'box' }, { icon: 'zoomFit' }, { icon: 'zoomArea' },
    { icon: 'prevView' }, { icon: 'section' }, { icon: 'viewOrient', caret: true }, { icon: 'display', caret: true },
    { icon: 'glasses', caret: true }, { icon: 'ball' }, { icon: 'scene', caret: true }, { icon: 'monitor', caret: true },
    { icon: 'ball' }, { icon: 'motion' },
];

function Viewport() {
    return (
        <main className="relative flex-1 overflow-hidden">
            <Scene />
            <div className="absolute inset-x-0 top-[7px] flex justify-center gap-[7px] pr-[8px]">
                {viewTools.map(({ icon, caret }, i) => (
                    <button key={i} aria-label={icon} className="flex items-center gap-[4px]">
                        <Icon name={icon} />
                        {caret && <Caret className="mr-px" />}
                    </button>
                ))}
            </div>
            <button aria-label="Collapse panel" className="absolute top-[240px] left-0 h-7 w-2 rounded-r border border-l-0 border-[#7b7e96] bg-[#d9dcea]">
                <svg viewBox="0 0 7 26" className="h-[26px] w-[7px]" aria-hidden="true">
                    <path d="M5 3v6L2 6zM5 10v6l-3-3zM5 17v6l-3-3z" fill="#4b4d84" />
                </svg>
            </button>
            <svg viewBox="0 0 66 58" className="absolute top-[31px] right-[42px] h-[58px] w-[66px]" opacity=".42" aria-hidden="true">
                <path d="M17 1H2v18q0 4 5 4h10" fill="none" stroke="#7080e0" strokeWidth="2" />
                <path d="M4 16l4-5 11-5 4 3-4 4-11 4z" fill="#f0d870" stroke="#605030" />
                <path d="M18 6l3-1 3 3-2 2z" fill="#e08080" />
                <path d="M24 13q11 4 8 14-2 4-7 4v5l-9-8 9-8v5q6-4-1-12z" fill="#b878d8" stroke="#8048b0" />
                <path d="M45 37l17 17M62 37L45 54" stroke="#d83838" strokeWidth="4" strokeLinecap="round" />
            </svg>
            <div className="absolute top-10 right-0 flex flex-col">
                {['home', 'library', 'folder', 'palette', 'colorBall', 'props'].map((name) => (
                    <button
                        key={name}
                        aria-label={name}
                        className={clsx(
                            'flex h-6 w-6 items-center justify-center rounded-l border border-r-0 border-[#6d7088]',
                            name === 'props' ? 'bg-[#eceef6]' : 'bg-linear-to-r from-[#c9ccdc] to-[#a2a5bb]',
                        )}
                    >
                        <Icon name={name} />
                    </button>
                ))}
            </div>
        </main>
    );
}

const playback = ['M4 3v8M11 3L6 7l5 4z', 'M9 3L4 7l5 4z', 'M5 3l5 4-5 4z', 'M3 3l5 4-5 4zM10 3v8'];

function StudyTabs() {
    return (
        <div className="flex h-[15px] border-t border-black bg-[#e1e4ec] pl-[3px] font-['Liberation_Sans',Arial,sans-serif] text-[12px] leading-[13px] text-black">
            {playback.map((d) => (
                <button key={d} aria-label="Step" className="w-4 border border-[#8d90a4] bg-[#b4b7c8]">
                    <svg viewBox="0 0 14 14" className="h-3 w-[14px]" aria-hidden="true">
                        <path d={d} fill="#8c8fa4" stroke="#8c8fa4" />
                    </svg>
                </button>
            ))}
            <button className="ml-[3px] bg-[#e3e5ee] px-[10px] font-bold">Model</button>
            <button className="border border-t-0 border-[#44465a] bg-[#b7bacf] pr-[14px] pl-[7px]">Motion Study 1</button>
        </div>
    );
}

function Groove() {
    return <i className="mr-[10px] h-[13px] w-px bg-[#e2e4ee]" />;
}

function StatusBar() {
    return (
        <footer className="relative flex h-[23px] items-center border-t-2 border-[#5c5f72] bg-linear-to-b from-[#d2d5e8] to-[#a9acbe] pb-[2px] pl-[2px] text-black">
            <span className="flex-1">SolidWorks Premium 2012</span>
            <span className="w-[56px]">-12mm</span>
            <span className="w-[59px]">55.54mm</span>
            <span className="w-[48px]">0mm</span>
            <span className="w-[76px]">Under Defined</span>
            <Groove />
            <span className="w-[80px]">Editing Sketch5</span>
            <Groove />
            <span className="w-[31px]"><Icon name="traffic" className="h-[13px] w-[13px]" /></span>
            <Groove />
            <button className="flex w-[66px] items-center gap-3">
                MMGS
                <svg viewBox="0 0 5 3" className="h-[3px] w-[5px]" aria-hidden="true"><path d="M0 3h5L2.500 0z" fill="#333" /></svg>
            </button>
            <button aria-label="Quick tips" className="mr-12 size-[13px] border border-[#1c4a90] bg-white text-[11px] leading-[11px] font-bold text-[#109018]">?</button>
            <svg viewBox="0 0 6 12" className="mr-[17px] h-3 w-[6px]" aria-hidden="true">
                <path d="M5 0Q0 2 1 6t4 6V9L4 6l1-3z" fill="#f4c030" stroke="#8a6008" strokeWidth=".8" />
            </svg>
            <div role="tooltip" className="absolute bottom-0 left-[500px] border border-black bg-[#ffffe1] px-[2px] leading-4 shadow-[2px_1px_1px_#555]">17 - Paint</div>
        </footer>
    );
}

export default function App() {
    return (
        <div className="flex h-screen flex-col overflow-hidden bg-[#e1e4ec] font-['DejaVu_Sans_Condensed','Noto_Sans',sans-serif] text-[11px] select-none">
            <TitleBar />
            <Ribbon />
            <TabRow />
            <div className="flex min-h-0 flex-1">
                <FeatureManager />
                <Viewport />
            </div>
            <StudyTabs />
            <StatusBar />
        </div>
    );
}
